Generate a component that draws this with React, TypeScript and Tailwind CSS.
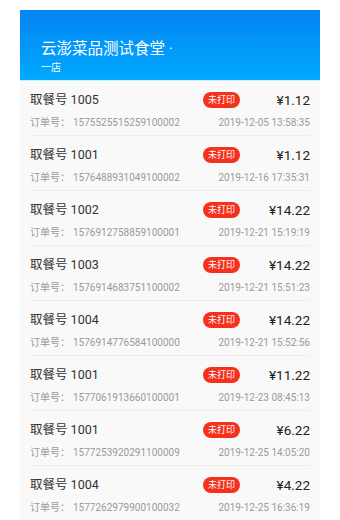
const orders = [
  { no: "1005", order: "1575525515259100002", time: "2019-12-05 13:58:35", price: "¥1.12" },
  { no: "1001", order: "1576488931049100002", time: "2019-12-16 17:35:31", price: "¥1.12" },
  { no: "1002", order: "1576912758859100001", time: "2019-12-21 15:19:19", price: "¥14.22" },
  { no: "1003", order: "1576914683751100002", time: "2019-12-21 15:51:23", price: "¥14.22" },
  { no: "1004", order: "1576914776584100000", time: "2019-12-21 15:52:56", price: "¥14.22" },
  { no: "1001", order: "1577061913660100001", time: "2019-12-23 08:45:13", price: "¥11.22" },
  { no: "1001", order: "1577253920291100009", time: "2019-12-25 14:05:20", price: "¥6.22" },
  { no: "1004", order: "1577262979900100032", time: "2019-12-25 16:36:19", price: "¥4.22" },
];

export default function App() {
  return (
    <div
      className="h-[520px] w-[340px] overflow-hidden bg-white px-5 pt-[10px]"
      style={{ fontFamily: "Roboto, 'Noto Sans CJK SC', sans-serif" }}
    >
      <div className="h-[70px] bg-gradient-to-b from-[#0684f2] to-[#02a9fe] pl-[21px] pt-[29px] text-white">
        <div className="whitespace-nowrap text-[15.5px] leading-[20px]">云澎菜品测试食堂 ·</div>
        <div className="mt-[2px] text-[10px] leading-[14px]">一店</div>
      </div>
      <div className="h-px bg-[#cfeefc]" />
      <div className="bg-[#f9f9f9] px-[10px]">
        {orders.map((o, i) => (
          <div key={i} className="border-b border-[#ededed] pb-[5px] pt-[9px]">
            <div className="flex h-5 items-center">
              <div className="flex-1 whitespace-nowrap text-[12.5px] text-[#333]">取餐号 {o.no}</div>
              <span className="flex h-4 w-[37px] items-center justify-center rounded-full bg-[#f5301c] text-[9px] leading-none text-white">
                未打印
              </span>
              <div className="w-[70px] text-right text-[13.5px] text-[#222]">{o.price}</div>
            </div>
            <div className="mt-[4px] flex h-4 items-center whitespace-nowrap text-[10px] text-[#999]">
              <span className="w-[43px] shrink-0">订单号：</span>
              <span className="flex-1">{o.order}</span>
              <span>{o.time}</span>
            </div>
          </div>
        ))}
      </div>
    </div>
  );
}
